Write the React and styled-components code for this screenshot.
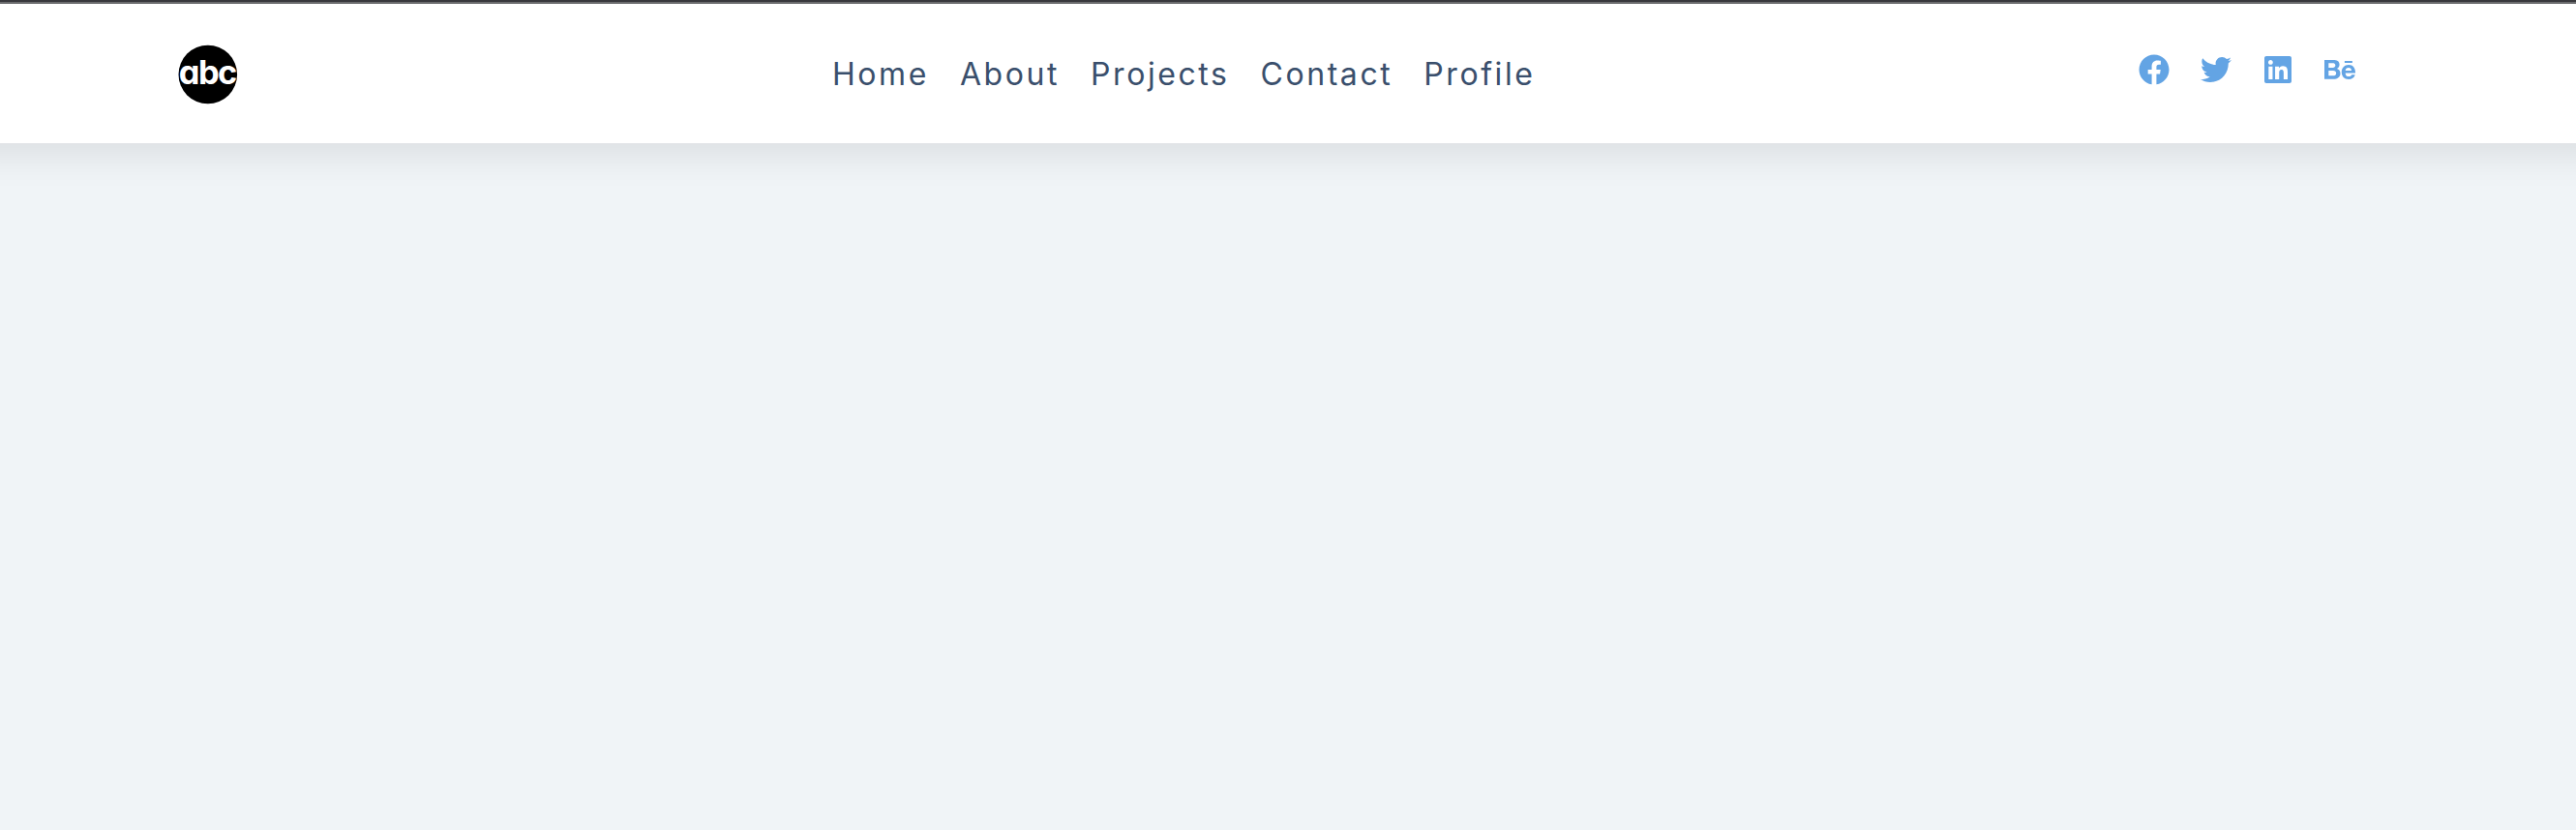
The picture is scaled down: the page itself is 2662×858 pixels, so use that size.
import React from "react";
import styled, { createGlobalStyle } from "styled-components";
import { FaFacebook, FaTwitter, FaLinkedin, FaBehance } from "react-icons/fa";

const GlobalStyle = createGlobalStyle`
  * { box-sizing: border-box; }
  body {
    margin: 0;
    background: #f0f4f7;
    font-family: Inter, "Liberation Sans", sans-serif;
  }
`;

const Page = styled.div`
  min-height: 100vh;
  overflow: hidden;
  border-top: 2px solid #38383c;
`;

const Header = styled.header`
  display: flex;
  align-items: center;
  height: 146px;
  padding: 0 228px 0 184px;
  background: #fff;
  border-top: 2px solid #6b6c6e;
  box-shadow: 0 -28px 36px 40px rgba(0, 0, 0, 0.09);
`;

const Logo = styled.svg`
  display: block;
  width: 62px;
  height: 62px;
  margin-top: 2px;
  overflow: visible;
`;

const LogoText = styled.text`
  font-family: Inter, sans-serif;
  font-size: 34px;
  font-weight: 700;
  letter-spacing: -1.5px;
  font-feature-settings: "cv11";
  fill: #fff;
`;

const Nav = styled.nav`
  display: flex;
  gap: 32px;
  margin-left: 614px;
  padding-top: 1px;
`;

const NavLink = styled.a`
  font-size: 32px;
  line-height: 48px;
  letter-spacing: 2.57px;
  color: #3a4f6c;
  text-decoration: none;
`;

const Social = styled.div`
  display: flex;
  gap: 32px;
  margin-left: auto;
  margin-bottom: 8px;
`;

const SocialLink = styled.a`
  display: flex;
  width: 32px;
  height: 32px;
  color: #63a4e4;

  svg {
    width: 32px;
    height: 32px;
  }
`;

const links = ["Home", "About", "Projects", "Contact", "Profile"];

const socials = [
  { name: "Facebook", Icon: FaFacebook },
  { name: "Twitter", Icon: FaTwitter },
  { name: "LinkedIn", Icon: FaLinkedin },
  { name: "Behance", Icon: FaBehance },
];

export default function App() {
  return (
    <Page>
      <GlobalStyle />
      <Header>
        <Logo viewBox="0 0 62 62">
          <circle cx="30.8" cy="31" r="30.3" fill="#000" />
          <LogoText x="0.8" y="41" textLength="59" lengthAdjust="spacingAndGlyphs">
            abc
          </LogoText>
        </Logo>
        <Nav>
          {links.map((label) => (
            <NavLink key={label}>{label}</NavLink>
          ))}
        </Nav>
        <Social>
          {socials.map(({ name, Icon }) => (
            <SocialLink key={name} aria-label={name}>
              <Icon />
            </SocialLink>
          ))}
        </Social>
      </Header>
    </Page>
  );
}
